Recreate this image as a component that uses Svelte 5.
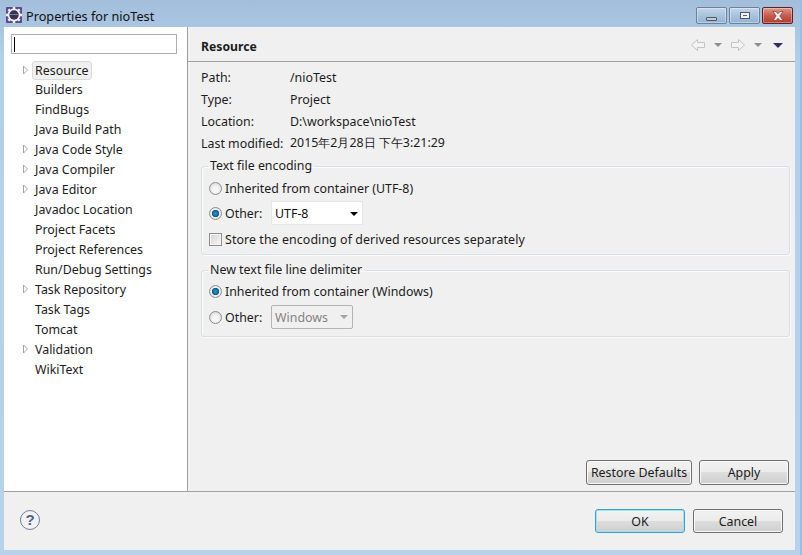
<script>
    const tree = [
        { name: 'Resource', arrow: true, selected: true },
        { name: 'Builders' },
        { name: 'FindBugs' },
        { name: 'Java Build Path' },
        { name: 'Java Code Style', arrow: true },
        { name: 'Java Compiler', arrow: true },
        { name: 'Java Editor', arrow: true },
        { name: 'Javadoc Location' },
        { name: 'Project Facets' },
        { name: 'Project References' },
        { name: 'Run/Debug Settings' },
        { name: 'Task Repository', arrow: true },
        { name: 'Task Tags' },
        { name: 'Tomcat' },
        { name: 'Validation', arrow: true },
        { name: 'WikiText' }
    ];

    const info = [
        ['Path:', '/nioTest'],
        ['Type:', 'Project'],
        ['Location:', 'D:\\workspace\\nioTest'],
        ['Last modified:', '2015年2月28日 下午3:21:29']
    ];

    // gear teeth of the title bar icon
    const teeth = [0, 45, 90, 135, 180, 225, 270, 315];
</script>

<div class="window">
    <div class="titlebar">
        <svg class="appicon" width="18" height="18" viewBox="0 0 18 18">
            <rect x="1" y="1" width="16" height="16" rx="1" fill="#5a4a8c" />
            <circle cx="9" cy="9" r="6.500" fill="#f0f0f4" />
            {#each teeth as a}
                <rect x="7.800" y="1" width="2.400" height="3" fill="#f0f0f4" transform="rotate({a} 9 9)" />
            {/each}
            <circle cx="9" cy="9" r="4.700" fill="#36344e" />
            <path d="M5 8.500h8" stroke="#7f7ca6" stroke-width="1" />
        </svg>
        <span class="title">Properties for nioTest</span>
        <div class="winbtns">
            <div class="winbtn min"><span></span></div>
            <div class="winbtn max"><span></span></div>
            <div class="winbtn close">
                <svg width="12" height="10" viewBox="0 0 12 10">
                    <path d="M1 .5h3L6 2.800 8 .5h3L7.800 5 11 9.500H8L6 7.200 4 9.500H1L4.200 5z" fill="#f2eeee" stroke="#6b2a2a" stroke-width="0.6" />
                </svg>
            </div>
        </div>
    </div>

    <div class="client">
        <div class="main">
            <aside class="side">
                <div class="search"><i class="caret"></i></div>
                <ul class="tree">
                    {#each tree as item}
                        <li>
                            <span class="twist" class:low={item.selected}>
                                {#if item.arrow}
                                    <svg width="7" height="10" viewBox="0 0 7 10"><path d="M1.500 1l4 4-4 4z" fill="#fff" stroke="#a6a6a6" /></svg>
                                {/if}
                            </span>
                            <span class="label" class:selected={item.selected}>{item.name}</span>
                        </li>
                    {/each}
                </ul>
            </aside>

            <section class="page">
                <header class="head">
                    <h1>Resource</h1>
                    <div class="nav">
                        <svg width="16" height="14" viewBox="0 0 16 14"><path d="M1.500 7L7.500 1.500V4.500H14.500V9.500H7.500V12.500z" fill="#f4f4f4" stroke="#c4c4c4" /></svg>
                        <i class="tri gray"></i>
                        <svg width="16" height="14" viewBox="0 0 16 14"><path d="M14.500 7L8.500 1.500V4.500H1.500V9.500H8.500V12.500z" fill="#f4f4f4" stroke="#c4c4c4" /></svg>
                        <i class="tri gray"></i>
                        <i class="tri dark"></i>
                    </div>
                </header>

                <div class="body">
                    <div class="info">
                        {#each info as row}
                            <div class="inforow"><span class="key">{row[0]}</span><span>{row[1]}</span></div>
                        {/each}
                    </div>

                    <fieldset class="group first">
                        <legend>Text file encoding</legend>
                        <div class="opt"><i class="radio"></i>Inherited from container (UTF-8)</div>
                        <div class="opt combo-row">
                            <i class="radio on"></i><span class="other">Other:</span>
                            <div class="combo"><span>UTF-8</span><i class="tri black"></i></div>
                        </div>
                        <div class="opt tall"><i class="check"></i>Store the encoding of derived resources separately</div>
                    </fieldset>

                    <fieldset class="group second">
                        <legend>New text file line delimiter</legend>
                        <div class="opt"><i class="radio on"></i>Inherited from container (Windows)</div>
                        <div class="opt combo-row">
                            <i class="radio"></i><span class="other">Other:</span>
                            <div class="combo disabled"><span>Windows</span><i class="tri gray"></i></div>
                        </div>
                    </fieldset>

                    <div class="pagebtns">
                        <button class="restore">Restore Defaults</button>
                        <button class="apply">Apply</button>
                    </div>
                </div>
            </section>
        </div>

        <footer class="foot">
            <svg class="help" width="22" height="22" viewBox="0 0 22 22">
                <circle cx="11" cy="11" r="9.500" fill="#f2f2f4" stroke="#6f7f9c" />
                <text x="11" y="16" text-anchor="middle" class="q">?</text>
            </svg>
            <div class="footbtns">
                <button class="ok">OK</button>
                <button class="cancel">Cancel</button>
            </div>
        </footer>
    </div>
</div>

<style>
    :global(body) {
        margin: 0;
    }

    .window {
        width: 802px;
        height: 555px;
        box-sizing: border-box;
        padding: 0 5px 5px 4px;
        display: flex;
        flex-direction: column;
        border-right: 2px solid #8cc4ea;
        background: linear-gradient(#a2bedb, #b4cfe9 60px, #b9d2ec);
        font-family: "Noto Sans", sans-serif;
        font-size: 12.4px;
        color: #1c1c1c;
        overflow: hidden;
    }

    .titlebar {
        height: 27px;
        flex: none;
        display: flex;
        align-items: center;
        padding-left: 1px;
    }

    .appicon {
        flex: none;
        margin-top: 3px;
    }

    .title {
        margin-left: 3px;
        margin-top: 4px;
        font-size: 12.7px;
        color: #111;
    }

    .winbtns {
        margin-left: auto;
        margin-right: 2px;
        align-self: flex-start;
        margin-top: 7px;
        display: flex;
        gap: 2px;
    }

    .winbtn {
        width: 31px;
        height: 17px;
        box-sizing: border-box;
        border: 1px solid #6d8199;
        border-radius: 2px;
        display: flex;
        align-items: center;
        justify-content: center;
        background: linear-gradient(#c3d6ea, #a9c3de 50%, #93b2d2);
        box-shadow: inset 0 0 0 1px rgba(255, 255, 255, 0.35);
    }

    .min span {
        width: 9px;
        height: 2px;
        margin-top: 6px;
        background: #c8c8c8;
        border: 1px solid #4d5a68;
        border-radius: 1px;
    }

    .max span {
        width: 4px;
        height: 1px;
        background: #55606e;
        border: 2px solid #f0f3f6;
        outline: 1px solid #4d5a68;
    }

    .close {
        border-color: #5e1f2a;
        background: linear-gradient(#dc9a8c, #c85c4c 50%, #b53a2c);
    }

    .client {
        flex: 1;
        display: flex;
        flex-direction: column;
        background: #f0f0f0;
        min-height: 0;
    }

    .main {
        height: 465px;
        flex: none;
        display: flex;
        box-sizing: border-box;
        border-bottom: 1px solid #a0a0a0;
    }

    .side {
        width: 176px;
        flex: none;
        background: #fff;
        border-right: 1px solid #a0a0a0;
        padding: 7px 0 0 7px;
    }

    .search {
        width: 162px;
        height: 18px;
        border: 1px solid #abadb3;
        background: #fff;
        display: flex;
        align-items: center;
        padding-left: 2px;
    }

    .caret {
        width: 1px;
        height: 15px;
        background: #000;
    }

    .tree {
        list-style: none;
        margin: 5px 0 0;
        padding: 0;
    }

    .tree li {
        height: 20px;
        display: flex;
        align-items: center;
    }

    .twist {
        width: 21px;
        padding-left: 11px;
        box-sizing: border-box;
        display: flex;
        align-items: center;
    }

    .twist.low {
        margin-top: 2px;
    }

    .label {
        padding: 0 2px;
        border: 1px solid transparent;
        line-height: 17px;
    }

    .selected {
        margin-top: 2px;
        background: #f0f0f0;
        border-color: #dadada;
        border-radius: 3px;
    }

    .page {
        flex: 1;
        display: flex;
        flex-direction: column;
        min-width: 0;
    }

    .head {
        height: 35px;
        box-sizing: border-box;
        flex: none;
        display: flex;
        align-items: center;
        padding: 0 12px 0 13px;
        border-bottom: 1px solid #a0a0a0;
    }

    h1 {
        margin: 4px 0 0;
        font-size: 12.2px;
        font-weight: 700;
    }

    .nav {
        margin-left: auto;
        margin-top: 2px;
        display: flex;
        align-items: center;
        gap: 8px;
    }

    .tri {
        display: block;
        width: 0;
        height: 0;
        border-left: 4px solid transparent;
        border-right: 4px solid transparent;
        border-top: 4px solid #8e8e8e;
    }

    .nav .dark {
        margin-left: 3px;
        border-left-width: 5px;
        border-right-width: 5px;
        border-top: 5px solid #3a2b63;
    }

    .body {
        flex: 1;
        display: flex;
        flex-direction: column;
        padding: 4px 5px 6px 13px;
    }

    .info {
        display: flex;
        flex-direction: column;
    }

    .inforow {
        height: 22px;
        display: flex;
        align-items: center;
    }

    .key {
        width: 89px;
        flex: none;
    }

    .group {
        margin: 0;
        padding: 2px 8px 0 6px;
        border: 1px solid #d8dfe6;
        border-radius: 3px;
        box-shadow: inset 1px 1px 0 #fafafa, 1px 1px 0 #fafafa;
        min-width: 0;
        box-sizing: border-box;
    }

    .group legend {
        padding: 0 2px;
        line-height: 16px;
    }

    .first {
        margin-top: 4px;
        height: 97px;
    }

    .second {
        margin-top: 7px;
        height: 75px;
        padding-top: 1px;
    }

    .opt {
        height: 24px;
        display: flex;
        align-items: center;
        padding-left: 1px;
    }

    .first .combo-row,
    .opt.tall {
        height: 26px;
    }

    .opt.tall {
        letter-spacing: 0.08px;
    }

    .second .combo-row {
        height: 28px;
    }

    .other {
        width: 46px;
    }

    .radio {
        width: 13px;
        height: 13px;
        margin-right: 3px;
        border-radius: 50%;
        border: 1px solid #8e8e8e;
        box-sizing: border-box;
        background: radial-gradient(circle at 50% 60%, #f6f6f6 30%, #cfcfcf);
        flex: none;
    }

    .radio.on {
        background: radial-gradient(circle at 50% 50%, #2f9ad2 0, #0b5a8e 3.400px, #f0f0f0 3.900px, #d8d8d8);
    }

    .check {
        width: 13px;
        height: 13px;
        margin-right: 3px;
        box-sizing: border-box;
        border: 1px solid #8e8f8f;
        background: linear-gradient(135deg, #d4d4d4, #f8f8f8);
        box-shadow: inset 0 0 0 1px #f4f4f4;
        flex: none;
    }

    .combo {
        width: 92px;
        height: 24px;
        box-sizing: border-box;
        background: #fff;
        border: 1px solid #e6e6e6;
        display: flex;
        align-items: center;
        justify-content: space-between;
        padding: 0 4px 0 3px;
        color: #111;
    }

    .tri.black {
        border-top-color: #000;
        margin-top: 1px;
    }

    .combo.disabled {
        width: 82px;
        background: #f0f0f0;
        border: 1px solid #b4b4b4;
        border-radius: 2px;
        color: #838383;
    }

    .combo.disabled .tri {
        border-top-color: #a4a4a4;
    }

    .pagebtns {
        margin-top: auto;
        margin-right: 1px;
        display: flex;
        justify-content: flex-end;
        gap: 7px;
    }

    button {
        height: 24px;
        padding: 0;
        box-sizing: border-box;
        font: inherit;
        color: #1c1c1c;
        border: 1px solid #707070;
        border-radius: 3px;
        background: linear-gradient(#f2f2f2 0, #ebebeb 50%, #dddddd 50%, #cfcfcf 100%);
        box-shadow: inset 0 0 0 1px #f8f8f8;
    }

    .restore {
        width: 106px;
        height: 25px;
    }

    .apply {
        width: 90px;
        height: 25px;
    }

    .foot {
        flex: 1;
        display: flex;
        align-items: center;
        padding: 0 12px 0 15px;
    }

    .help {
        flex: none;
        margin-top: -2px;
    }

    .q {
        font-family: "Liberation Sans", sans-serif;
        font-size: 15px;
        font-weight: 700;
        fill: #4c6189;
    }

    .footbtns {
        margin-left: auto;
        display: flex;
        gap: 8px;
    }

    .ok,
    .cancel {
        width: 90px;
    }

    .ok {
        border-color: #3c9fd0;
        box-shadow: inset 0 0 0 1px #9fe0f4;
    }
</style>
